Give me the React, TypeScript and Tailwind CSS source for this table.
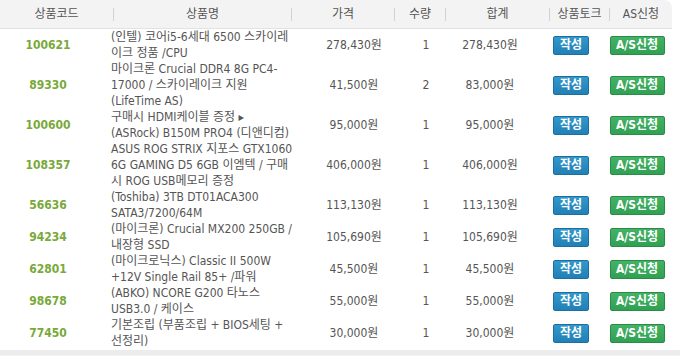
const rows = [
  { code: "100621", lines: ["(인텔) 코어i5-6세대 6500 스카이레", "이크 정품 /CPU"], price: "278,430원", qty: 1, total: "278,430원" },
  { code: "89330", lines: ["마이크론 Crucial DDR4 8G PC4-", "17000 / 스카이레이크 지원", "(LifeTime AS)"], price: "41,500원", qty: 2, total: "83,000원" },
  { code: "100600", lines: ["구매시 HDMI케이블 증정 ▸", "(ASRock) B150M PRO4 (디앤디컴)"], price: "95,000원", qty: 1, total: "95,000원" },
  { code: "108357", lines: ["ASUS ROG STRIX 지포스 GTX1060", "6G GAMING D5 6GB 이엠텍 / 구매", "시 ROG USB메모리 증정"], price: "406,000원", qty: 1, total: "406,000원" },
  { code: "56636", lines: ["(Toshiba) 3TB DT01ACA300", "SATA3/7200/64M"], price: "113,130원", qty: 1, total: "113,130원" },
  { code: "94234", lines: ["(마이크론) Crucial MX200 250GB /", "내장형 SSD"], price: "105,690원", qty: 1, total: "105,690원" },
  { code: "62801", lines: ["(마이크로닉스) Classic II 500W", "+12V Single Rail 85+ /파워"], price: "45,500원", qty: 1, total: "45,500원" },
  { code: "98678", lines: ["(ABKO) NCORE G200 타노스", "USB3.0 / 케이스"], price: "55,000원", qty: 1, total: "55,000원" },
  { code: "77450", lines: ["기본조립 (부품조립 + BIOS세팅 +", "선정리)"], price: "30,000원", qty: 1, total: "30,000원" },
];

const headers = [
  { label: "상품코드", w: "w-[113px]" },
  { label: "상품명", w: "w-[177px]" },
  { label: "가격", w: "w-[102px]" },
  { label: "수량", w: "w-[50px]" },
  { label: "합계", w: "w-[103px]" },
  { label: "상품토크", w: "w-[59px]" },
  { label: "AS신청", w: "w-[62px]" },
];

const Sep = () => <span className="h-[13px] w-px shrink-0 bg-[#d2d2d2]" />;

export default function App() {
  return (
    <div
      className="h-[362px] w-[680px] overflow-hidden bg-white text-[12px] text-[#555]"
      style={{ fontFamily: '"DejaVu Sans Condensed", "Noto Sans CJK KR", sans-serif' }}
    >
      <div className="flex h-[29px] w-[672px] items-center rounded-tr-[8px] border-b border-[#e2e2e2] bg-[#f3f3f3] text-[12px] text-[#555]">
        {headers.map((h, i) => (
          <div key={h.label} className="flex items-center">
            {i > 0 && <Sep />}
            <div className={`${h.w} text-center`}>{h.label}</div>
          </div>
        ))}
      </div>
      {rows.map((r) => (
        <div key={r.code} className="flex items-center">
          <div className="w-[96px] text-center text-[12px] font-bold text-[#79a93a]">{r.code}</div>
          <div className="w-[208px] whitespace-nowrap pl-[15px] leading-[16px]">
            {r.lines.map((l) => (
              <div key={l}>{l}</div>
            ))}
          </div>
          <div className="w-[100px] text-center">{r.price}</div>
          <div className="w-[44px] text-center">{r.qty}</div>
          <div className="w-[84px] text-center">{r.total}</div>
          <div className="flex w-[78px] justify-center">
            <span className="flex h-[19px] w-[36px] items-center justify-center rounded-[2px] border border-[#1c6f9e] bg-gradient-to-b from-[#3398cc] to-[#2180b6] text-[12px] font-bold text-white">
              작성
            </span>
          </div>
          <div className="flex w-[54px] justify-center">
            <span className="flex h-[19px] w-[55px] shrink-0 items-center justify-center rounded-[2px] border border-[#2a8c47] bg-gradient-to-b from-[#43b266] to-[#30a052] text-[12px] font-bold text-white">
              A/S신청
            </span>
          </div>
        </div>
      ))}
      <div className="mt-px h-[5px] bg-[#ececec]" />
      <div className="h-px bg-[#f4f4f4]" />
    </div>
  );
}
